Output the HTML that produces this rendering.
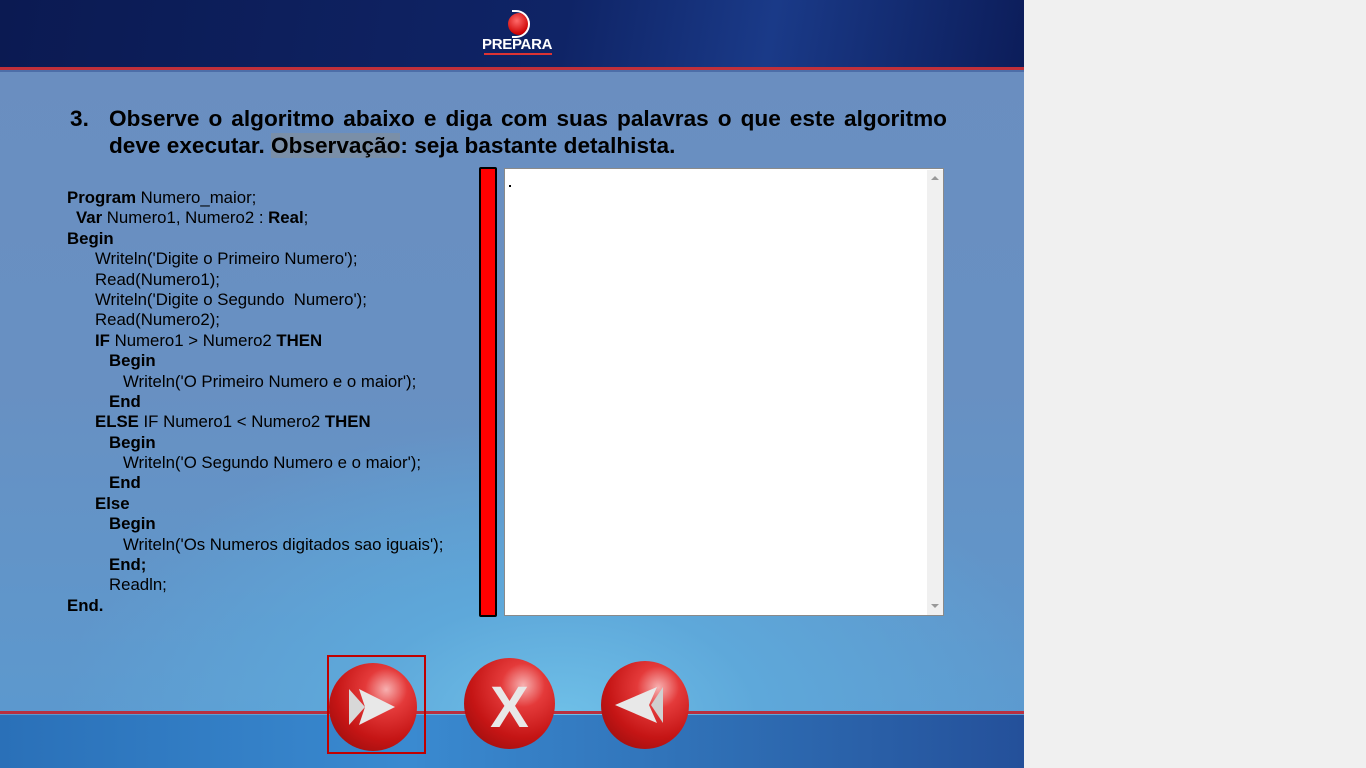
<!DOCTYPE html>
<html><head><meta charset="utf-8"><style>
body{margin:0;width:1366px;height:768px;background:#f0f0f0;position:relative;overflow:hidden;font-family:"Liberation Sans",sans-serif}
#s{position:absolute;left:0;top:0;width:1024px;height:768px;overflow:hidden;
background:radial-gradient(ellipse 500px 300px at 560px 720px,#6fc0e8 0%,#5ea8da 40%,rgba(100,150,200,0) 100%),linear-gradient(180deg,#6a8ec0 0%,#6890c2 50%,#5a9ad0 100%)}
#hd{position:absolute;left:0;top:0;width:1024px;height:67px;background:linear-gradient(100deg,#0b1a52 0%,#0f2466 55%,#1a3a88 75%,#0c1d5a 100%)}
.rl{position:absolute;left:0;width:1024px;height:3px;background:#c0303a}
#bt{position:absolute;left:0;top:715px;width:1024px;height:53px;background:linear-gradient(90deg,#2a70b8,#3a8ad0 40%,#2f6fb5 70%,#24509a)}
.t{position:absolute;color:#000;font-weight:bold;font-size:22.6px}
#code{position:absolute;left:67px;top:188px;font-size:16.8px;line-height:20.4px;color:#000;white-space:pre}
#code div{height:20.4px}
.a{padding-left:28px}.b{padding-left:42px}.c{padding-left:56px}
b{font-weight:bold}
.ball{position:absolute;width:88px;height:88px;border-radius:50%;background:radial-gradient(circle at 65% 30%,#f7b0b0 0%,#e43a3a 25%,#c51515 60%,#8a0b0b 100%)}
</style></head><body>
<div id="s">
<div id="hd"></div>
<div class="rl" style="top:67px"></div>
<div style="position:absolute;left:0;top:70px;width:1024px;height:2px;background:#4d6ea8"></div>
<div style="position:absolute;left:508px;top:13px;width:22px;height:22px;border-radius:50%;background:radial-gradient(circle at 40% 35%,#ff6a6a,#c00 70%,#700)"></div>
<div style="position:absolute;left:512px;top:10px;width:16px;height:24px;border:2px solid #fff;border-left:none;border-radius:0 14px 14px 0"></div>
<div style="position:absolute;left:482px;top:36px;color:#fff;font-weight:bold;font-size:15px;letter-spacing:-0.3px">PREPARA</div>
<div style="position:absolute;left:484px;top:53px;width:68px;height:2px;background:#d33"></div>
<div class="t" style="left:70px;top:106px">3.</div>
<div class="t" style="left:109px;top:106px;width:838px;text-align:justify;text-align-last:justify">Observe o algoritmo abaixo e diga com suas palavras o que este algoritmo</div>
<div class="t" style="left:109px;top:133px">deve executar. <span style="background:#7a8fa8">Observação</span>: seja bastante detalhista.</div>
<div id="code"><div><b>Program</b> Numero_maior;</div><div style="padding-left:9px"><b>Var</b> Numero1, Numero2 : <b>Real</b>;</div><div><b>Begin</b></div><div class="a">Writeln('Digite o Primeiro Numero');</div><div class="a">Read(Numero1);</div><div class="a">Writeln('Digite o Segundo  Numero');</div><div class="a">Read(Numero2);</div><div class="a"><b>IF</b> Numero1 &gt; Numero2 <b>THEN</b></div><div class="b"><b>Begin</b></div><div class="c">Writeln('O Primeiro Numero e o maior');</div><div class="b"><b>End</b></div><div class="a"><b>ELSE</b> IF Numero1 &lt; Numero2 <b>THEN</b></div><div class="b"><b>Begin</b></div><div class="c">Writeln('O Segundo Numero e o maior');</div><div class="b"><b>End</b></div><div class="a"><b>Else</b></div><div class="b"><b>Begin</b></div><div class="c">Writeln('Os Numeros digitados sao iguais');</div><div class="b"><b>End;</b></div><div class="b">Readln;</div><div><b>End.</b></div></div>
<div style="position:absolute;left:479px;top:167px;width:14px;height:446px;background:#f00;border:2px solid #000;border-radius:2px"></div>
<div style="position:absolute;left:504px;top:168px;width:440px;height:448px;background:#fff;border:1px solid #8a8a8a;box-sizing:border-box"></div>
<div style="position:absolute;left:927px;top:170px;width:16px;height:445px;background:#f0f0f0"></div>
<div style="position:absolute;left:931px;top:176px;width:0;height:0;border-left:4px solid transparent;border-right:4px solid transparent;border-bottom:4px solid #999"></div>
<div style="position:absolute;left:931px;top:604px;width:0;height:0;border-left:4px solid transparent;border-right:4px solid transparent;border-top:4px solid #999"></div>
<div style="position:absolute;left:509px;top:185px;width:2px;height:2px;background:#000"></div>
<div class="rl" style="top:711px;background:#b83040"></div>
<div id="bt"></div>
<div class="ball" style="left:329px;top:663px"></div>
<div class="ball" style="left:464px;top:658px;width:91px;height:91px"></div>
<div class="ball" style="left:601px;top:661px"></div>
<svg style="position:absolute;left:329px;top:663px" width="88" height="88"><polygon points="20,26 36,44 20,62" fill="#d8d8d8"/><polygon points="30,26 66,44 30,62 36,44" fill="#e8e8e8"/></svg>
<div style="position:absolute;left:464px;top:658px;width:91px;height:91px;color:#e8e8e8;font-weight:bold;font-size:58px;text-align:center;line-height:100px">X</div>
<svg style="position:absolute;left:601px;top:661px" width="88" height="88"><polygon points="62,26 50,44 62,62" fill="#d0d0d0"/><polygon points="56,26 14,44 56,62 48,44" fill="#e8e8e8"/></svg>
<div style="position:absolute;left:327px;top:655px;width:95px;height:95px;border:2px solid #c00000"></div>
</div>
</body></html>
